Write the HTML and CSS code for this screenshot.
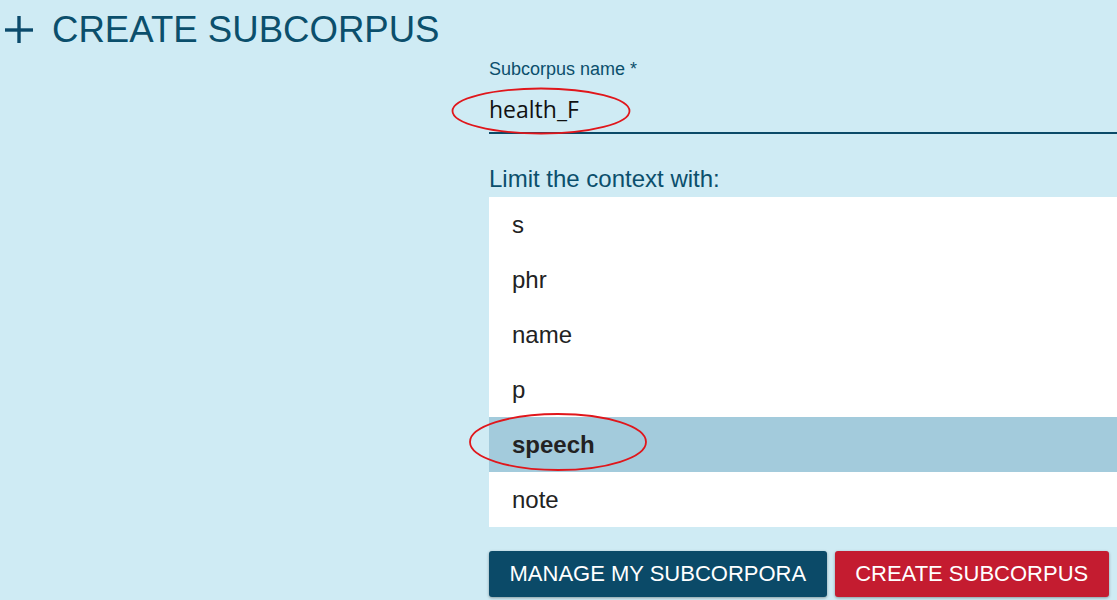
FILE: index.html
```html
<!DOCTYPE html>
<html lang="en">
<head>
<meta charset="utf-8">
<title>Create subcorpus</title>
<link rel="stylesheet" href="styles.css">
</head>
<body>
<div class="page">
  <header class="header">
    <svg class="plus" viewBox="0 0 28 28" width="28" height="28" aria-hidden="true">
      <rect x="0" y="12.3" width="28" height="3.4" fill="#0b4a6b"/>
      <rect x="12.3" y="0" width="3.4" height="27" fill="#0b4a6b"/>
    </svg>
    <h1 class="title">CREATE SUBCORPUS</h1>
  </header>
  <main class="form">
    <div class="label">Subcorpus name *</div>
    <div class="name-input">health_F</div>
    <div class="limit-label">Limit the context with:</div>
    <ul class="list">
      <li class="item">s</li>
      <li class="item">phr</li>
      <li class="item">name</li>
      <li class="item">p</li>
      <li class="item selected">speech</li>
      <li class="item">note</li>
    </ul>
    <div class="buttons">
      <button class="btn btn-manage">MANAGE MY SUBCORPORA</button>
      <button class="btn btn-create">CREATE SUBCORPUS</button>
    </div>
  </main>
  <svg class="marks" width="1117" height="600" viewBox="0 0 1117 600" aria-hidden="true">
    <ellipse cx="541" cy="111" rx="88.5" ry="22.5" fill="none" stroke="#e0161b" stroke-width="1.8"/>
    <ellipse cx="558" cy="442" rx="88" ry="28" fill="none" stroke="#e0161b" stroke-width="1.8"/>
  </svg>
</div>
</body>
</html>
```
FILE: styles.css
```css
html, body {
  margin: 0;
  padding: 0;
}
body {
  background: #cfebf4;
  font-family: "Liberation Sans", Arial, sans-serif;
  width: 1117px;
  height: 600px;
  overflow: hidden;
}
.page {
  position: relative;
  width: 1117px;
  height: 600px;
}
.header {
  display: flex;
  align-items: center;
  padding: 10px 0 0 5px;
  height: 40px;
}
.plus {
  display: block;
  flex: none;
}
.title {
  margin: 0 0 0 19px;
  font-size: 36.6px;
  line-height: 40px;
  font-weight: normal;
  color: #0b4f6c;
}
.form {
  margin: 9px 0 0 489px;
  display: flex;
  flex-direction: column;
}
.label {
  font-size: 18px;
  line-height: 21px;
  color: #0b4f6c;
}
.name-input {
  margin-top: 13px;
  height: 41px;
  box-sizing: border-box;
  border-bottom: 2px solid #0b4a68;
  font-family: "Open Sans", "Noto Sans", sans-serif;
  font-size: 23px;
  line-height: 32px;
  color: #111;
}
.limit-label {
  margin-top: 31px;
  font-size: 24px;
  line-height: 28px;
  color: #0b4f6c;
}
.list {
  list-style: none;
  margin: 4px 0 0;
  padding: 0;
  background: #fff;
}
.item {
  height: 55px;
  line-height: 55px;
  padding-left: 23px;
  font-size: 24px;
  color: #222;
}
.item.selected {
  background: #a3cbdc;
  font-weight: bold;
}
.buttons {
  display: flex;
  gap: 8px;
  margin-top: 24px;
}
.btn {
  height: 46px;
  padding: 0 20.5px;
  border: none;
  border-radius: 3px;
  font-family: "Liberation Sans", Arial, sans-serif;
  font-size: 22px;
  color: #fff;
  box-shadow: 0 1px 3px rgba(0, 0, 0, 0.35);
  cursor: pointer;
}
.btn-manage {
  background: #0b4a68;
}
.btn-create {
  background: #c41c30;
}
.marks {
  position: absolute;
  left: 0;
  top: 0;
  pointer-events: none;
}
```
